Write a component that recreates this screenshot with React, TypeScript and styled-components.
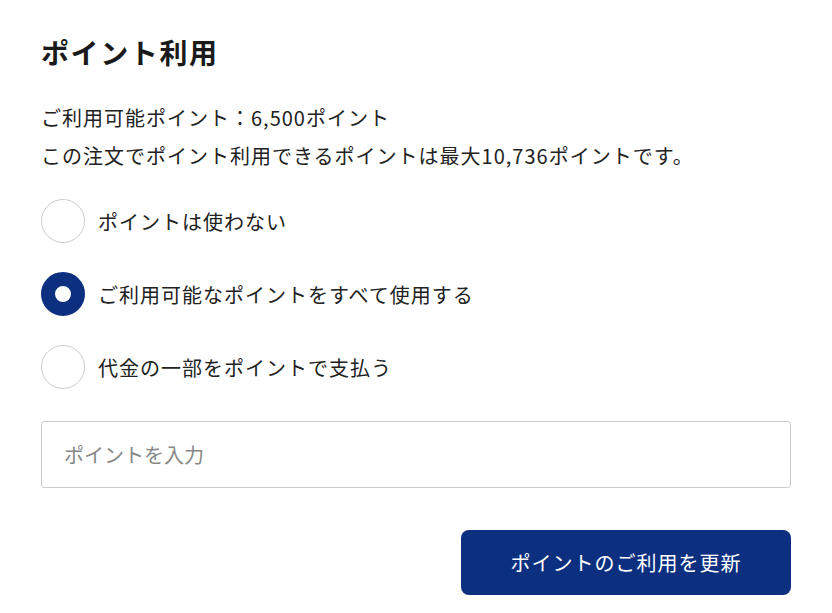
import * as React from "react";
import styled, { createGlobalStyle } from "styled-components";

const GlobalStyle = createGlobalStyle`
    body {
        margin: 0;
        background: #fff;
        font-family: "Noto Sans CJK JP", "Noto Sans", sans-serif;
        color: #222;
    }
`;

const navy = "#0c2f80";

const Page = styled.div`
    width: 832px;
    padding: 29px 41px 0 41px;
    box-sizing: border-box;
`;

const Title = styled.h2`
    margin: 0;
    font-size: 28px;
    font-weight: 700;
    line-height: 46px;
    letter-spacing: 1.6px;
    color: #1a1a1a;
`;

const Info = styled.p`
    margin: 24px 0 0 0;
    font-size: 20px;
    line-height: 38px;
    letter-spacing: 1px;
`;

const RadioList = styled.div`
    display: flex;
    flex-direction: column;
    gap: 29px;
    margin-top: 24px;
`;

const RadioRow = styled.label`
    display: flex;
    align-items: center;
    gap: 13px;
    cursor: pointer;
`;

const HiddenInput = styled.input`
    display: none;
`;

const Circle = styled.span<{ checked: boolean }>`
    width: 44px;
    height: 44px;
    border-radius: 50%;
    box-sizing: border-box;
    flex-shrink: 0;
    background: #fff;
    border: ${props => props.checked ? `14px solid ${navy}` : "1px solid #ccc"};
`;

const RadioText = styled.span`
    font-size: 20px;
    letter-spacing: 1px;
    color: #222;
`;

const PointInput = styled.input`
    display: block;
    width: 100%;
    height: 67px;
    margin-top: 32px;
    box-sizing: border-box;
    border: 1px solid #ccc;
    border-radius: 3px;
    padding: 0 22px;
    font-family: "Noto Sans CJK JP", "Noto Sans", sans-serif;
    font-size: 20px;
    color: #222;
    outline: none;
    &::placeholder {
        color: #888;
    }
`;

const Footer = styled.div`
    display: flex;
    justify-content: flex-end;
    margin-top: 42px;
`;

const Button = styled.button`
    width: 330px;
    height: 65px;
    border: none;
    border-radius: 8px;
    background: ${navy};
    color: #fff;
    font-family: "Noto Sans CJK JP", "Noto Sans", sans-serif;
    font-size: 20px;
    letter-spacing: 1px;
    cursor: pointer;
`;

const options = [
    "ポイントは使わない",
    "ご利用可能なポイントをすべて使用する",
    "代金の一部をポイントで支払う",
];

export default function App() {
    const [selected, setSelected] = React.useState(1);
    return (
        <Page>
            <GlobalStyle />
            <Title>ポイント利用</Title>
            <Info>
                ご利用可能ポイント：6,500ポイント
                <br />
                この注文でポイント利用できるポイントは最大10,736ポイントです。
            </Info>
            <RadioList>
                {options.map((text, i) => (
                    <RadioRow key={i}>
                        <HiddenInput type="radio" name="point" checked={selected === i} onChange={() => setSelected(i)} />
                        <Circle checked={selected === i} />
                        <RadioText>{text}</RadioText>
                    </RadioRow>
                ))}
            </RadioList>
            <PointInput placeholder="ポイントを入力" />
            <Footer>
                <Button>ポイントのご利用を更新</Button>
            </Footer>
        </Page>
    );
}
